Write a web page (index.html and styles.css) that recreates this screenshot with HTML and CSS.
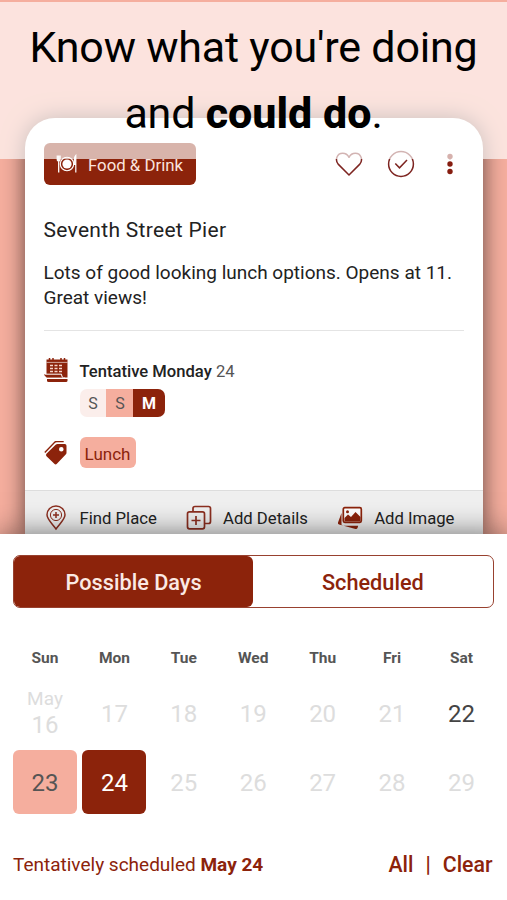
FILE: index.html
```
<!DOCTYPE html>
<html lang="en">
<head>
    <meta charset="utf-8">
    <title>Possible Days</title>
    <link rel="stylesheet" href="styles.css">
</head>
<body>
    <div class="screen">
        <div class="banner">
            <h1>Know what you're doing<br>and <b>could do</b>.</h1>
        </div>

        <div class="card">
            <div class="card-top">
                <div class="category">
                    <svg width="22" height="20" viewBox="0 0 22 20" fill="none" stroke="#fff">
                        <circle cx="11" cy="10" r="6.7" stroke-width="1.1"/>
                        <circle cx="11" cy="10" r="4.6" fill="#fff" stroke="none"/>
                        <path d="M1.3 1.5v4q0 1.5 1.4 1.5t1.4-1.5v-4M2.7 1.5V18.5" stroke-width="1.3"/>
                        <path d="M19.8 18.5V1.5q-2 2-1.5 9h1.5" stroke-width="1.2" fill="#fff"/>
                    </svg>
                    <span>Food &amp; Drink</span>
                </div>
                <div class="card-icons">
                    <svg width="28" height="28" viewBox="0 0 28 28" fill="none" stroke="#7d2420" stroke-width="1.5">
                        <path d="M14 25L3.4 14.4C-.5 10 2 3.3 7.7 3.3c3 0 5 1.5 6.3 4 1.3-2.5 3.3-4 6.3-4 5.7 0 8.2 6.7 4.3 11.1z" stroke-linejoin="round"/>
                    </svg>
                    <svg width="28" height="28" viewBox="0 0 28 28" fill="none" stroke="#7d2420" stroke-width="1.5">
                        <circle cx="14" cy="14" r="12.4"/>
                        <path d="M8.3 13.5l4.2 4.3 7.5-7.8"/>
                    </svg>
                    <svg width="8" height="28" viewBox="0 0 8 28" fill="#861d10">
                        <circle cx="4" cy="6.5" r="2.7"/>
                        <circle cx="4" cy="14" r="2.7"/>
                        <circle cx="4" cy="21.5" r="2.7"/>
                    </svg>
                </div>
            </div>

            <h2>Seventh Street Pier</h2>
            <p class="description">Lots of good looking lunch options. Opens at 11.<br>Great views!</p>
            <hr>

            <div class="row">
                <svg width="24" height="24" viewBox="0 0 24 24" fill="#8c230b">
                    <path d="M2.5 1.5h21v18h-21z"/>
                    <path d="M5.5 0v3M9 0v3M17 0v3M20.5 0v3" stroke="#8c230b" stroke-width="1.5"/>
                    <path d="M2.5 4.4h21" stroke="#fff" stroke-width=".6"/>
                    <path d="M6 7.5h3M10.5 7.5h3M15 7.5h3M6 10.5h3M10.5 10.5h3M15 10.5h3M6 13.5h3M10.5 13.5h3M15 13.5h3" stroke="#f6d5cc" stroke-width="1.6"/>
                    <path d="M0 16h17.500q.5 3 3 3.500H3Q.5 19 0 16z"/>
                    <path d="M.5 16.200h17q.3 4.100 3.500 4.100H3" fill="none" stroke="#fff" stroke-width="1"/>
                    <path d="M3 21h20.500v1.500q0 1.500-1.500 1.500H4.500Q3 24 3 22.500z"/>
                </svg>
                <p class="when"><b>Tentative Monday</b> 24</p>
            </div>
            <div class="days">
                <span>S</span><span class="maybe">S</span><span class="picked">M</span>
            </div>
            <div class="row tags">
                <svg width="24" height="24" viewBox="0 0 24 24" fill="#8c230b">
                    <path fill-rule="evenodd" d="M13.500 3h7.300q1.700 0 1.700 1.700v7q0 1-.8 1.800l-8.800 9.300q-1.300 1.200-2.600 0l-7.800-7.600q-1.200-1.200 0-2.500L11.600 3.700q.8-.7 1.900-.7zM17.300 6a2.300 2.300 0 1 0 0 4.600 2.300 2.300 0 1 0 0-4.600z"/>
                    <path d="M.8 11.500L10.700 1.200q.8-.7 2-.7h7" fill="none" stroke="#8c230b" stroke-width="1.4"/>
                </svg>
                <span class="tag">Lunch</span>
            </div>

            <div class="actions">
                <div class="action">
                    <svg width="24" height="26" viewBox="0 0 24 26" fill="none" stroke="#8c2f20" stroke-width="1.5">
                        <path d="M12 24C9 19.5 3 14.5 3 9.8a9 8.8 0 0 1 18 0C21 14.5 15 19.5 12 24z"/>
                        <circle cx="12" cy="10" r="5.6" stroke-width="1"/>
                        <path d="M12 7v6M9 10h6"/>
                    </svg>
                    <span>Find Place</span>
                </div>
                <div class="action">
                    <svg width="26" height="26" viewBox="0 0 26 26" fill="none" stroke="#8c2f20" stroke-width="1.7">
                        <rect x="1.5" y="6.8" width="17" height="17" rx="2"/>
                        <path d="M7 6.5V3.500q0-2 2-2h13.500q2 0 2 2V16.500q0 2-2 2H19"/>
                        <path d="M10 11v9M5.5 15.500h9"/>
                    </svg>
                    <span>Add Details</span>
                </div>
                <div class="action">
                    <svg width="26" height="26" viewBox="0 0 26 26" fill="#8c230b">
                        <path d="M4.5 8L1 17.500q-.5 1.500 1 2L18.500 24q1.500.3 2-1l.7-2.200H6q-1.500 0-1.500-1.500z"/>
                        <rect x="6.3" y="2.7" width="18" height="14.600" rx="1.5" fill="#fff" stroke="#8c230b" stroke-width="1.7"/>
                        <path d="M7.500 16.500V13l3.500-3.500 3 2.500 4.500-5 5 5v4.500z"/>
                        <circle cx="10.5" cy="6.7" r="1.5"/>
                    </svg>
                    <span>Add Image</span>
                </div>
            </div>
        </div>
    </div>

    <div class="sheet">
        <div class="tabs">
            <div class="tab active">Possible Days</div>
            <div class="tab">Scheduled</div>
        </div>

        <div class="calendar">
            <div class="weekday">Sun</div>
            <div class="weekday">Mon</div>
            <div class="weekday">Tue</div>
            <div class="weekday">Wed</div>
            <div class="weekday">Thu</div>
            <div class="weekday">Fri</div>
            <div class="weekday">Sat</div>

            <div class="day first"><small>May</small>16</div>
            <div class="day">17</div>
            <div class="day">18</div>
            <div class="day">19</div>
            <div class="day">20</div>
            <div class="day">21</div>
            <div class="day open">22</div>

            <div class="day maybe">23</div>
            <div class="day picked">24</div>
            <div class="day">25</div>
            <div class="day">26</div>
            <div class="day">27</div>
            <div class="day">28</div>
            <div class="day">29</div>
        </div>

        <div class="footer">
            <p class="status">Tentatively scheduled <b>May 24</b></p>
            <div class="links"><span>All</span><span>|</span><span>Clear</span></div>
        </div>
    </div>
</body>
</html>
```
FILE: styles.css
```
* {
    box-sizing: border-box;
}
body {
    margin: 0;
    font-family: Roboto, sans-serif;
    background-color: #fff;
    color: #222;
}
h1, h2, p {
    margin: 0;
    font-weight: 400;
}
svg {
    display: block;
    flex: none;
}
.screen {
    position: relative;
    height: 534px;
    padding: 118px 24.5px 0 25px;
    background-color: #f5ae9e;
    overflow: hidden;
}
/* translucent strip that lies over the top of the card */
.banner {
    position: absolute;
    z-index: 1;
    top: 2px;
    left: 0;
    right: 0;
    height: 157px;
    padding-top: 12px;
    background-color: rgba(255, 255, 255, 0.66);
}
h1 {
    color: #000;
    font-size: 43px;
    line-height: 66px;
    letter-spacing: -0.2px;
    text-align: center;
    white-space: nowrap;
}
h1 b {
    font-weight: 800;
    letter-spacing: 0;
}
.card {
    display: flex;
    flex-direction: column;
    height: 416px;
    padding: 25px 18.5px 0;
    background-color: #fff;
    border-radius: 30px 30px 0 0;
    box-shadow: 0 0 22px rgba(0, 0, 0, 0.6);
}
.card-top {
    display: flex;
    justify-content: space-between;
    align-items: center;
    height: 42px;
}
.category {
    display: flex;
    align-items: center;
    gap: 10px;
    width: 152px;
    height: 42px;
    padding-left: 12.5px;
    border-radius: 6px;
    background-color: #8c230b;
    color: #fbe4de;
    font-size: 16.8px;
    line-height: 42px;
    white-space: nowrap;
}
.category span {
    padding-top: 2px;
}
.card-icons {
    display: flex;
    gap: 24px;
    padding-right: 10px;
}
.card-icons svg:last-child {
    margin-left: 7.5px;
}
h2 {
    margin-top: 31px;
    font-size: 21px;
    line-height: 28px;
    letter-spacing: 0.3px;
}
.description {
    margin-top: 16px;
    font-size: 19px;
    line-height: 25px;
    white-space: nowrap;
}
hr {
    width: 100%;
    height: 1px;
    margin: 20px 0 27px;
    border: none;
    background-color: #e4e4e4;
}
.row {
    display: flex;
    align-items: center;
    gap: 12px;
    height: 24px;
}
.when {
    padding-top: 3px;
    color: #555;
    font-size: 16.6px;
    line-height: 24px;
}
.when b {
    color: #222;
    font-weight: 500;
}
.days {
    display: flex;
    flex: none;
    width: 85px;
    height: 28px;
    margin: 7px 0 0 36px;
    border-radius: 7px;
    overflow: hidden;
    background-color: #fbeeeb;
    font-size: 16px;
    line-height: 30px;
    text-align: center;
    color: #555;
}
.days span {
    flex: 1;
}
.days .maybe {
    background-color: #f5ae9e;
}
.days .picked {
    flex: 1.15;
    background-color: #8c230b;
    color: #fff;
    font-weight: 700;
}
.tags {
    height: 31px;
    margin-top: 20px;
}
.tag {
    width: 56px;
    height: 31px;
    border-radius: 6px;
    background-color: #f5ae9e;
    color: #8c230b;
    font-size: 17px;
    line-height: 34px;
    text-align: center;
}
.actions {
    display: flex;
    justify-content: space-between;
    flex: 1;
    margin: 22px -18.5px 0;
    padding: 0 28px 0 18.5px;
    border-top: 1px solid #ddd;
    background-color: #f0f0f0;
}
.action {
    display: flex;
    align-items: center;
    gap: 11px;
    padding-top: 11px;
    font-size: 16.7px;
    white-space: nowrap;
}
.action:first-child {
    gap: 12px;
}
.sheet {
    position: relative;
    height: 366px;
    padding: 21px 13.5px 0 13px;
    background-color: #fff;
    box-shadow: 0 0 28px rgba(0, 0, 0, 0.55);
}
.tabs {
    display: flex;
    height: 53px;
    border: 1px solid #98412f;
    border-radius: 7px;
}
.tab {
    flex: 1;
    color: #8c230b;
    font-size: 21.7px;
    font-weight: 500;
    line-height: 53px;
    text-align: center;
}
.tab.active {
    border-radius: 6px;
    background-color: #8c230b;
    color: #fbe9e4;
}
.calendar {
    display: grid;
    grid-template-columns: repeat(7, 64px);
    grid-template-rows: 20px 72px 64px;
    row-gap: 5px;
    justify-content: space-between;
    margin-top: 40px;
}
.weekday {
    color: #555;
    font-size: 15.5px;
    font-weight: 700;
    line-height: 20px;
    text-align: center;
}
.day {
    border-radius: 6px;
    color: #ddd;
    font-size: 24px;
    line-height: 66px;
    text-align: center;
}
.day:nth-child(n + 8):nth-child(-n + 14) {
    padding-top: 8px;
}
.day.first {
    line-height: 26px;
}
.day.first small {
    display: block;
    padding-top: 5px;
    font-size: 19px;
}
.day.open {
    color: #444;
}
.day.maybe {
    background-color: #f5ae9e;
    color: #555;
}
.day.picked {
    background-color: #8c230b;
    color: #fff;
}
.footer {
    display: flex;
    justify-content: space-between;
    margin-top: 36px;
    padding-right: 1px;
    color: #8c230b;
    line-height: 30px;
    white-space: nowrap;
}
.status {
    font-size: 19px;
}
.links {
    display: flex;
    gap: 12px;
    font-size: 21.3px;
    font-weight: 500;
}
```
